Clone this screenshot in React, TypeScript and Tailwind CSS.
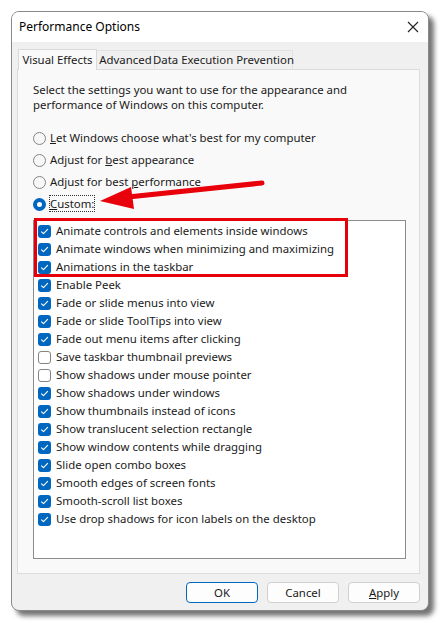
import React from 'react'

const font = { fontFamily: '"Noto Sans", "Open Sans", sans-serif' }

const effects = [
  { label: 'Animate controls and elements inside windows', on: true },
  { label: 'Animate windows when minimizing and maximizing', on: true },
  { label: 'Animations in the taskbar', on: true },
  { label: 'Enable Peek', on: true },
  { label: 'Fade or slide menus into view', on: true },
  { label: 'Fade or slide ToolTips into view', on: true },
  { label: 'Fade out menu items after clicking', on: true },
  { label: 'Save taskbar thumbnail previews', on: false },
  { label: 'Show shadows under mouse pointer', on: false },
  { label: 'Show shadows under windows', on: true },
  { label: 'Show thumbnails instead of icons', on: true },
  { label: 'Show translucent selection rectangle', on: true },
  { label: 'Show window contents while dragging', on: true },
  { label: 'Slide open combo boxes', on: true },
  { label: 'Smooth edges of screen fonts', on: true },
  { label: 'Smooth-scroll list boxes', on: true },
  { label: 'Use drop shadows for icon labels on the desktop', on: true },
]

function Radio({ checked, children }: { checked?: boolean; children: React.ReactNode }) {
  return (
    <div className="flex items-center h-[22px]">
      {checked ? (
        <span className="w-[13px] h-[13px] rounded-full border-[4px] border-[#0067c0] bg-white" />
      ) : (
        <span className="w-[13px] h-[13px] rounded-full border border-[#858585] bg-[#f7f7f7]" />
      )}
      <span className="ml-[4px]">{children}</span>
    </div>
  )
}

function Check({ on }: { on: boolean }) {
  if (!on)
    return <span className="w-[13px] h-[13px] rounded-[3px] border border-[#858585] bg-white" />
  return (
    <span className="w-[13px] h-[13px] rounded-[3px] bg-[#0067c0] flex items-center justify-center">
      <svg width="9" height="9" viewBox="0 0 9 9" fill="none">
        <path d="M1.5 4.8 L3.5 6.7 L7.6 2.3" stroke="white" strokeWidth="1.1" strokeLinecap="round" strokeLinejoin="round" />
      </svg>
    </span>
  )
}

export default function App() {
  return (
    <div className="w-[447px] h-[630px] bg-white pt-[11px] pl-[11px] relative text-[11.4px] text-[#1a1a1a]" style={font}>
      <div className="w-[418px] h-[600px] rounded-[8px] border border-[#8a8a8a] bg-[#f0f0f0] flex flex-col overflow-hidden shadow-[5px_5px_5px_rgba(0,0,0,0.55)]">
        {/* Title bar */}
        <div className="h-[30px] bg-white flex items-center justify-between pl-[7px] pr-[9px] shrink-0">
          <span className="text-[12px] text-black">Performance Options</span>
          <svg width="12" height="12" viewBox="0 0 12 12">
            <path d="M1 1 L11 11 M11 1 L1 11" stroke="#222" strokeWidth="1.1" />
          </svg>
        </div>

        {/* Tabs */}
        <div className="flex items-end pl-[6px] pt-[6px] h-[27px] shrink-0 whitespace-nowrap">
          <div className="w-[79px] h-[21px] bg-[#f9f9f9] border border-b-0 border-[#d9d9d9] flex items-center justify-center relative z-10 -mb-px">
            Visual Effects
          </div>
          <div className="w-[58px] h-[19px] bg-[#f0f0f0] border border-b-0 border-l-0 border-[#e2e2e2] flex items-center justify-center">
            Advanced
          </div>
          <div className="w-[138px] h-[19px] bg-[#f0f0f0] border border-b-0 border-l-0 border-[#e2e2e2] flex items-center justify-center">
            Data Execution Prevention
          </div>
        </div>

        {/* Tab panel */}
        <div className="mx-[5px] w-[403px] h-[505px] bg-[#f9f9f9] border border-[#dcdcdc] pl-[15px] pr-[13px] pt-[12px] flex flex-col shrink-0">
          <p className="leading-[15px]">
            Select the settings you want to use for the appearance and
            <br />
            performance of Windows on this computer.
          </p>
          <div className="mt-[15px] flex flex-col">
            <Radio>
              <span className="underline">L</span>et Windows choose what&apos;s best for my computer
            </Radio>
            <Radio>
              Adjust for <span className="underline">b</span>est appearance
            </Radio>
            <Radio>
              Adjust for best <span className="underline">p</span>erformance
            </Radio>
            <Radio checked>
              <span className="outline-1 outline-dotted outline-[#333]">
                <span className="underline">C</span>ustom:
              </span>
            </Radio>
          </div>

          {/* List */}
          <div className="mt-[5px] h-[339px] bg-white border border-[#8c8c8c] pt-[1px] pl-[4px] flex flex-col relative">
            {effects.map((e) => (
              <div key={e.label} className="flex items-center h-[18px] gap-[5px]">
                <Check on={e.on} />
                <span>{e.label}</span>
              </div>
            ))}
            <div className="absolute left-[0px] top-[-3px] w-[314px] h-[59px] border-[3px] border-[#e5000c] pointer-events-none" />
          </div>
        </div>

        {/* Buttons */}
        <div className="flex justify-end gap-[9px] pr-[8px] mt-[8px]">
          <button className="w-[72px] h-[21px] rounded-[4px] border border-[#0067c0] bg-[#fdfdfd]">OK</button>
          <button className="w-[72px] h-[21px] rounded-[4px] border border-[#d0d0d0] bg-[#fdfdfd]">Cancel</button>
          <button className="w-[72px] h-[21px] rounded-[4px] border border-[#d0d0d0] bg-[#fdfdfd]">
            <span className="underline">A</span>pply
          </button>
        </div>
      </div>

      {/* Annotation arrow */}
      <svg className="absolute left-0 top-0 pointer-events-none" width="447" height="630">
        <line x1="262" y1="183" x2="128" y2="197" stroke="#e8000b" strokeWidth="5" strokeLinecap="round" />
        <polygon points="100,201 131,187 134,209" fill="#e8000b" />
      </svg>
    </div>
  )
}
